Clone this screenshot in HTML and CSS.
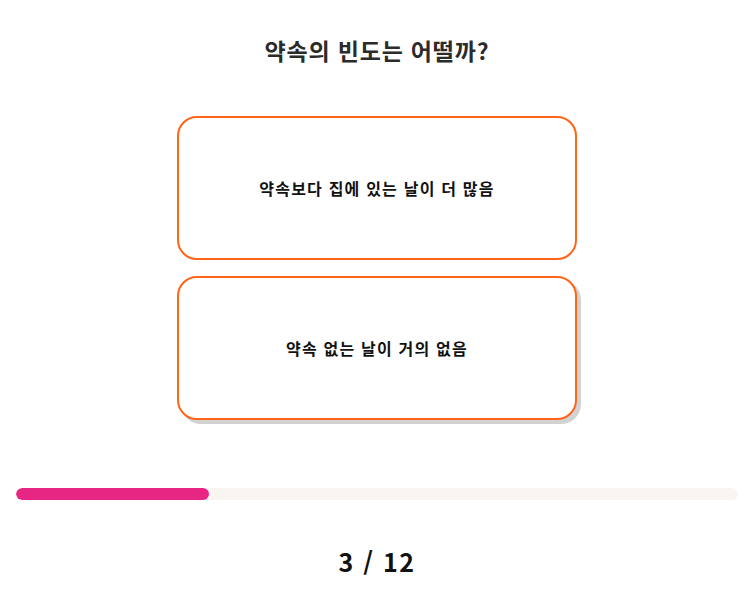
FILE: index.html
```html
<!DOCTYPE html>
<html lang="ko">
<head>
<meta charset="utf-8">
<link rel="stylesheet" href="styles.css">
</head>
<body>
<main class="quiz">
  <h1 class="question">약속의 빈도는 어떨까?</h1>
  <div class="answers">
    <button class="answer">약속보다 집에 있는 날이 더 많음</button>
    <button class="answer is-hover">약속 없는 날이 거의 없음</button>
  </div>
  <div class="progress"><div class="progress-fill" style="width: 26.7%"></div></div>
  <div class="counter">3 / 12</div>
</main>
</body>
</html>
```
FILE: styles.css
```css
* { box-sizing: border-box; }
html, body { margin: 0; padding: 0; background: #fff; }
body {
  font-family: "Noto Sans CJK KR", "Noto Sans", sans-serif;
  color: #111;
}
.quiz {
  width: 748px;
  padding: 0 10px 0 16px;
  display: flex;
  flex-direction: column;
  align-items: center;
}
.question {
  margin: 33px 0 0;
  font-size: 23px;
  font-weight: 700;
  line-height: 34px;
  letter-spacing: 0.8px;
  color: #2b2b2b;
}
.answers {
  margin-top: 49px;
  display: flex;
  flex-direction: column;
  gap: 16px;
}
.answer {
  width: 400px;
  height: 144px;
  border: 2px solid #ff6516;
  border-radius: 20px;
  background: #fff;
  font-family: inherit;
  font-size: 16px;
  font-weight: 700;
  letter-spacing: 1.2px;
  color: #111;
  padding: 0;
}
.answer.is-hover {
  box-shadow: 4px 4px 0 #d2d2d2;
}
.progress {
  margin-top: 68px;
  width: 100%;
  height: 12px;
  border-radius: 6px;
  background: #f9f6f1;
  overflow: hidden;
}
.progress-fill {
  height: 100%;
  border-radius: 6px;
  background: #e72583;
}
.counter {
  margin-top: 44px;
  font-size: 25px;
  font-weight: 700;
  line-height: 34px;
  letter-spacing: 1.5px;
  color: #111;
}
```
